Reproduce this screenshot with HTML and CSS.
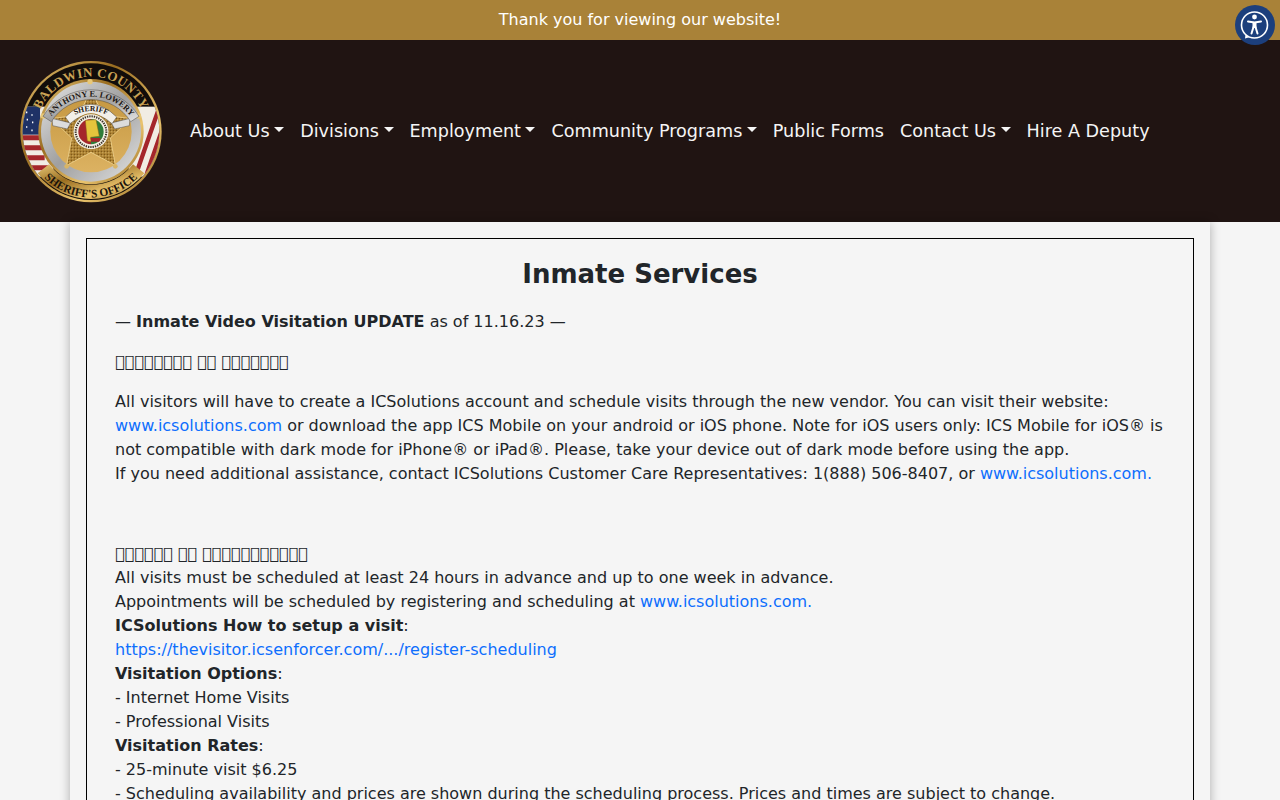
FILE: index.html
```html
<!DOCTYPE html>
<html lang="en">
  <head>
    <meta charset="UTF-8" />
    <meta name="viewport" content="width=device-width, initial-scale=1.0" />
    <title>Inmate Services</title>
    <link rel="stylesheet" href="styles.css">
  </head>
  <body>
    <div class="top-banner">Thank you for viewing our website!</div>

    <nav class="navbar">
      <svg class="logo" viewBox="60 57 426 429" role="img" aria-label="Baldwin County Sheriff's Office">
        <defs>
          <linearGradient id="gold" x1="0" y1="0" x2="1" y2="1">
            <stop offset="0" stop-color="#e8c877" />
            <stop offset="0.35" stop-color="#9a6d20" />
            <stop offset="0.7" stop-color="#eac46e" />
            <stop offset="1" stop-color="#8d6016" />
          </linearGradient>
          <linearGradient id="disc" x1="0" y1="0" x2="0" y2="1">
            <stop offset="0" stop-color="#c4963f" />
            <stop offset="1" stop-color="#dcb262" />
          </linearGradient>
          <linearGradient id="silver" x1="0" y1="0" x2="1" y2="1">
            <stop offset="0" stop-color="#e6e6e6" />
            <stop offset="0.5" stop-color="#9f9f9f" />
            <stop offset="1" stop-color="#e4e4e4" />
          </linearGradient>
          <pattern id="speckle" width="9" height="9" patternUnits="userSpaceOnUse">
            <rect width="9" height="9" fill="#ab7f2f" />
            <circle cx="2.5" cy="2.5" r="1.6" fill="#e9cf8b" />
            <circle cx="7" cy="6.5" r="1.6" fill="#5f430f" />
          </pattern>
          <path id="topArc" d="M 108 272 A 165 165 0 0 1 438 272" />
          <path id="bottomArc" d="M 76 272 A 197 197 0 0 0 470 272" />
          <path id="nameArc" d="M 124 316 A 149 149 0 0 1 422 316" />
          <path id="titleArc" d="M 205 232 Q 273 188 341 232" />
          <clipPath id="ringClip"><circle cx="273" cy="272" r="205" /></clipPath>
        </defs>

        <circle cx="273" cy="272" r="212" fill="url(#gold)" />
        <circle cx="273" cy="272" r="205" fill="#120d0a" />

        <!-- flags on both sides of the ring -->
        <g clip-path="url(#ringClip)">
          <rect x="60" y="197" width="100" height="210" fill="#f1ece3" />
          <rect x="60" y="197" width="60" height="84" fill="#1f3266" />
          <path d="M60 283h62v15H60zM60 313h68v15H60zM60 343h74v15H60zM60 373h84v15H60z" fill="#a5262b" />
          <path d="M78 214h4M94 222h4M80 236h4M96 244h4M78 258h4M94 268h4" stroke="#fff" stroke-width="5" />
          <rect x="386" y="197" width="100" height="210" fill="#f1ece3" />
          <path d="M408 400 L476 205 M440 400 L492 250" stroke="#a5262b" stroke-width="13" fill="none" />
        </g>

        <!-- bottom gold band -->
        <path d="M 113 397 A 205 205 0 0 0 433 397 L 399 370 A 160 160 0 0 1 147 370 Z" fill="url(#gold)" />

        <text class="seal-text seal-top"><textPath href="#topArc" startOffset="50%">BALDWIN COUNTY</textPath></text>
        <text class="seal-text seal-bottom"><textPath href="#bottomArc" startOffset="50%">SHERIFF'S OFFICE</textPath></text>

        <circle cx="273" cy="272" r="158" fill="url(#gold)" />
        <circle cx="273" cy="272" r="150" fill="url(#silver)" />
        <circle cx="273" cy="272" r="122" fill="url(#disc)" />
        <circle cx="270" cy="122" r="8" fill="#e8c878" />
        <circle cx="130" cy="225" r="8" fill="#e8c878" />
        <circle cx="415" cy="225" r="8" fill="#e8c878" />

        <polygon points="273,147 309,222 392,233 331,291 346,373 273,334 200,373 215,291 154,233 237,222" fill="url(#speckle)" stroke="#f0d48e" stroke-width="2.5" />
        <circle cx="200" cy="376" r="7" fill="#d9b566" />
        <circle cx="346" cy="376" r="7" fill="#d9b566" />

        <!-- banners -->
        <path d="M 156 232 L 212 246 L 202 264 L 158 254 Z M 390 232 L 334 246 L 344 264 L 388 254 Z" fill="#dcdcdc" stroke="#4a4742" stroke-width="1.5" />
        <path d="M 129 226 A 170 170 0 0 1 417 226 L 392 242 A 140 140 0 0 0 154 242 Z" fill="url(#silver)" stroke="#4a4742" stroke-width="1.5" />
        <path d="M 196 228 Q 273 152 350 228 L 336 248 Q 273 192 210 248 Z" fill="#f2efe8" stroke="#4a4742" stroke-width="1.5" />
        <text class="seal-text seal-name"><textPath href="#nameArc" startOffset="50%">ANTHONY E. LOWERY</textPath></text>
        <text class="seal-text seal-title"><textPath href="#titleArc" startOffset="50%">SHERIFF</textPath></text>

        <!-- center of the star -->
        <circle cx="273" cy="272" r="54" fill="#f4efe2" stroke="#a87f30" stroke-width="3" />
        <circle cx="273" cy="272" r="46" fill="none" stroke="#3a3128" stroke-width="6" stroke-dasharray="4 3" />
        <path d="M 273 234 A 38 38 0 0 0 273 310 Z" fill="#a5262b" />
        <path d="M 273 234 A 38 38 0 0 1 273 310 Z" fill="#2f7d3a" />
        <path d="M 256 238 L 288 236 L 298 286 L 272 289 L 273 302 L 262 300 Z" fill="#e5c53c" stroke="#8d6016" stroke-width="1.5" />
        <path d="M 272 291 H 302 L 298 302 H 274 Z" fill="#a5262b" />
      </svg>

      <ul class="nav-links">
        <li><a href="#" class="dropdown">About Us</a></li>
        <li><a href="#" class="dropdown">Divisions</a></li>
        <li><a href="#" class="dropdown">Employment</a></li>
        <li><a href="#" class="dropdown">Community Programs</a></li>
        <li><a href="#">Public Forms</a></li>
        <li><a href="#" class="dropdown">Contact Us</a></li>
        <li><a href="#">Hire A Deputy</a></li>
      </ul>
    </nav>

    <button class="access-widget" aria-label="Accessibility">
      <svg viewBox="0 0 40 40" width="40" height="40">
        <circle cx="20" cy="20" r="20" fill="#1c3f7c" />
        <path d="M 10 33.5 L 11 26 L 17 31.5 Z" fill="#fff" />
        <circle cx="19.5" cy="20" r="13" fill="#1c3f7c" stroke="#fff" stroke-width="1.6" />
        <circle cx="19.5" cy="12" r="2.4" fill="#fff" />
        <path d="M 13 16.5 L 19.5 17.5 L 26 16.5" fill="none" stroke="#fff" stroke-width="2" stroke-linecap="round" />
        <path d="M 19.5 17 V 23" stroke="#fff" stroke-width="4" />
        <path d="M 18.5 22 L 16.5 28.5 M 20.5 22 L 22.5 28.5" fill="none" stroke="#fff" stroke-width="2" stroke-linecap="round" />
      </svg>
    </button>

    <main class="container">
      <div class="content-box">
        <h1>Inmate Services</h1>
        <p>— <strong>Inmate Video Visitation UPDATE</strong> as of 11.16.23 —</p>
        <p>&#xE000;&#xE000;&#xE000;&#xE000;&#xE000;&#xE000;&#xE000;&#xE000; &#xE000;&#xE000; &#xE000;&#xE000;&#xE000;&#xE000;&#xE000;&#xE000;&#xE000;</p>
        <p>
          All visitors will have to create a ICSolutions account and schedule visits through the new vendor. You can visit their website:
          <a href="#">www.icsolutions.com</a> or download the app ICS Mobile on your android or iOS phone. Note for iOS users only: ICS Mobile for iOS® is not compatible with dark mode for iPhone® or iPad®. Please, take your device out of dark mode before using the app.<br />
          If you need additional assistance, contact ICSolutions Customer Care Representatives: 1(888) 506-8407, or <a href="#">www.icsolutions.com.</a>
        </p>
        <p>&nbsp;</p>
        <p>
          &#xE000;&#xE000;&#xE000;&#xE000;&#xE000;&#xE000; &#xE000;&#xE000; &#xE000;&#xE000;&#xE000;&#xE000;&#xE000;&#xE000;&#xE000;&#xE000;&#xE000;&#xE000;&#xE000;<br />
          All visits must be scheduled at least 24 hours in advance and up to one week in advance.<br />
          Appointments will be scheduled by registering and scheduling at <a href="#">www.icsolutions.com.</a><br />
          <strong>ICSolutions How to setup a visit</strong>:<br />
          <a href="#">https://thevisitor.icsenforcer.com/.../register-scheduling</a><br />
          <strong>Visitation Options</strong>:<br />
          - Internet Home Visits<br />
          - Professional Visits<br />
          <strong>Visitation Rates</strong>:<br />
          - 25-minute visit $6.25<br />
          - Scheduling availability and prices are shown during the scheduling process. Prices and times are subject to change.
        </p>
      </div>
    </main>
  </body>
</html>
```

FILE: styles.css
```css
html,
body {
  height: 800px;
  overflow: hidden;
}
body {
  margin: 0;
  font-family: "DejaVu Sans", sans-serif;
  font-size: 16px;
  line-height: 24px;
  color: #212529;
  background-color: #f5f5f5;
}
a {
  color: #0d6efd;
  text-decoration: none;
}
.top-banner {
  height: 40px;
  line-height: 40px;
  text-align: center;
  color: white;
  background-color: #a98238;
}
.navbar {
  display: flex;
  align-items: center;
  height: 182px;
  padding-left: 20px;
  background-color: #201412;
}
.logo {
  width: 142px;
  height: 143px;
  flex-shrink: 0;
}
.seal-text {
  font-family: "Liberation Serif", serif;
  font-weight: bold;
  text-anchor: middle;
}
.seal-top {
  font-size: 39px;
  letter-spacing: 1px;
  fill: #c9a255;
}
.seal-bottom {
  font-size: 34px;
  fill: #1c140c;
}
.seal-name {
  font-size: 25px;
  fill: #1d1712;
}
.seal-title {
  font-size: 23px;
  fill: #1d1712;
}
.nav-links {
  display: flex;
  list-style: none;
  margin: 0 0 1px 20px;
  padding: 0;
}
.nav-links a {
  display: block;
  padding: 8px;
  font-size: 17.6px;
  line-height: 26px;
  color: #f5f5f5;
}
.dropdown::after {
  content: "";
  display: inline-block;
  margin-left: 0.255em;
  vertical-align: 0.255em;
  border-top: 0.3em solid;
  border-left: 0.3em solid transparent;
  border-right: 0.3em solid transparent;
}
.access-widget {
  position: fixed;
  top: 5px;
  right: 5px;
  width: 40px;
  height: 40px;
  padding: 0;
  border: none;
  background: none;
}
.container {
  width: 1140px;
  margin: 0 auto;
  padding: 16px;
  box-sizing: border-box;
  box-shadow: 0 0 10px rgba(0, 0, 0, 0.3);
}
.content-box {
  padding: 16px 28px;
  border: 1px solid black;
}
.content-box h1 {
  margin: 0 0 16px;
  font-size: 26px;
  line-height: 39px;
  text-align: center;
}
.content-box p {
  margin: 0 0 16px;
}
```
